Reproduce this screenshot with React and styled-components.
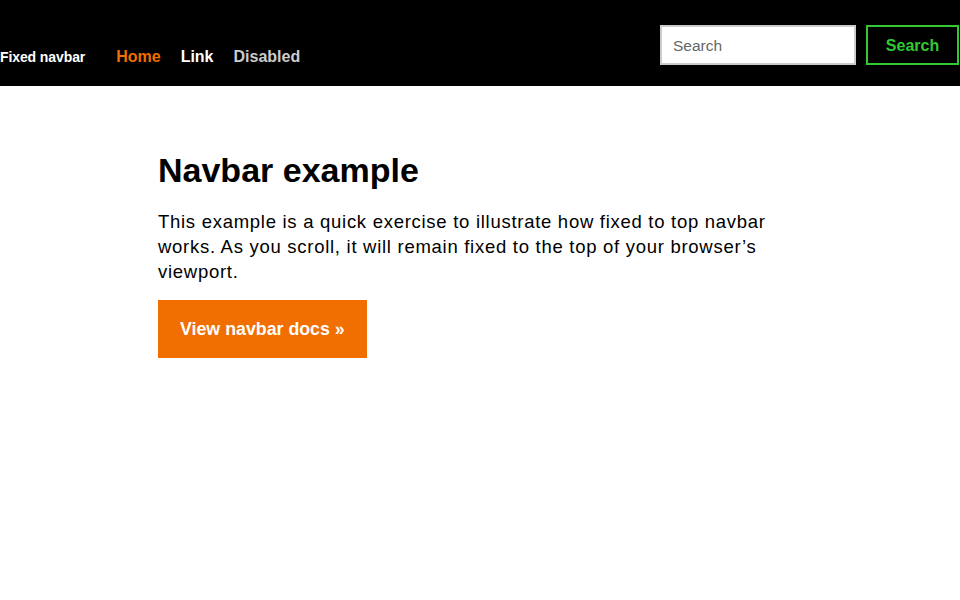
import React from "react";
import styled, { createGlobalStyle } from "styled-components";

const Global = createGlobalStyle`
  html, body { margin: 0; padding: 0; background: #fff; }
  body { font-family: "Liberation Sans", Arial, sans-serif; color: #000; }
  * { box-sizing: border-box; }
`;

const Navbar = styled.nav`
  height: 86px;
  background: #000;
  display: flex;
  align-items: flex-start;
  justify-content: space-between;
  padding: 25px 1px 0 0;
`;

const Left = styled.div`
  display: flex;
  align-items: baseline;
  padding-top: 23px;
`;

const Brand = styled.a`
  font-size: 14px;
  font-weight: 700;
  color: #fff;
  text-decoration: none;
  margin-right: 31px;
  letter-spacing: -0.1px;
`;

const NavLinks = styled.div`
  display: flex;
  gap: 20px;
`;

const NavLink = styled.a`
  font-size: 16px;
  font-weight: 700;
  text-decoration: none;
  color: ${(p) => (p.$active ? "#f16e00" : p.$disabled ? "#ccc" : "#fff")};
`;

const Form = styled.form`
  display: flex;
  gap: 10px;
`;

const Input = styled.input`
  width: 196px;
  height: 40px;
  border: 2px solid #ccc;
  background: #fff;
  padding: 1px 11px 0;
  font-family: "Liberation Sans", Arial, sans-serif;
  font-size: 15.5px;
  outline: none;
  &::placeholder { color: #666; }
`;

const SearchButton = styled.button`
  width: 93px;
  height: 40px;
  border: 2px solid #32c832;
  background: #000;
  color: #32c832;
  font-family: "Liberation Sans", Arial, sans-serif;
  font-size: 16px;
  font-weight: 700;
  padding: 2px 0 0;
`;

const Main = styled.main`
  width: 644px;
  margin: 0 auto;
  padding-top: 67px;
`;

const Title = styled.h1`
  font-size: 34px;
  font-weight: 700;
  line-height: 1;
  margin: 0 0 22px;
`;

const Lead = styled.p`
  font-size: 18.5px;
  line-height: 25px;
  letter-spacing: 0.72px;
  margin: 0 0 16px;
`;

const DocsButton = styled.a`
  display: inline-flex;
  align-items: center;
  height: 58px;
  padding: 0 22px;
  background: #f16e00;
  color: #fff;
  font-size: 17.8px;
  font-weight: 700;
  text-decoration: none;
`;

export default function App() {
  return (
    <>
      <Global />
      <Navbar>
        <Left>
          <Brand href="#">Fixed navbar</Brand>
          <NavLinks>
            <NavLink href="#" $active>Home</NavLink>
            <NavLink href="#">Link</NavLink>
            <NavLink $disabled>Disabled</NavLink>
          </NavLinks>
        </Left>
        <Form onSubmit={(e) => e.preventDefault()}>
          <Input placeholder="Search" />
          <SearchButton type="submit">Search</SearchButton>
        </Form>
      </Navbar>
      <Main>
        <Title>Navbar example</Title>
        <Lead>
          This example is a quick exercise to illustrate how fixed to top navbar
          works. As you scroll, it will remain fixed to the top of your browser’s
          viewport.
        </Lead>
        <DocsButton href="#">View navbar docs »</DocsButton>
      </Main>
    </>
  );
}
